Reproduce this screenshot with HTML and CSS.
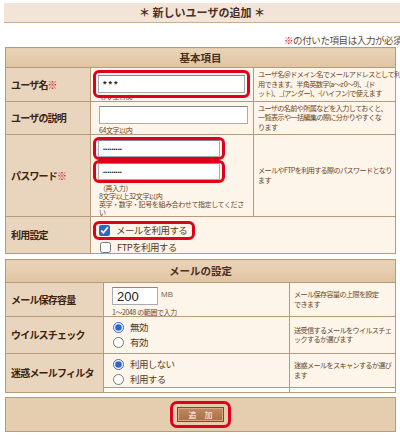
FILE: index.html
```html
<!DOCTYPE html>
<html lang="ja">
<head>
    <meta charset="UTF-8">
    <meta name="viewport" content="width=device-width, initial-scale=1.0">
    <title>新しいユーザの追加</title>
    <link rel="stylesheet" href="styles.css">
</head>
<body>
    <h1 class="title">＊ 新しいユーザの追加 ＊</h1>
    <p class="note"><span class="req">※</span>の付いた項目は入力が必須です。</p>

    <table class="form-table basic">
        <colgroup><col class="c-label"><col class="c-field"><col></colgroup>
        <tr class="head"><th colspan="3">基本項目</th></tr>
        <tr class="r-user">
            <th class="label">ユーザ名<span class="req">※</span></th>
            <td class="field">
                <span class="mark"><input type="text" class="text wide" value="***"></span>
                <div class="hint clipped">32文字以内</div>
            </td>
            <td class="desc">ユーザ名＠ドメイン名でメールアドレスとして利<br>用できます。半角英数字(a～z 0～9)、.(ド<br>ット)、_(アンダー)、-(ハイフン)で使えます</td>
        </tr>
        <tr class="r-memo">
            <th class="label">ユーザの説明</th>
            <td class="field">
                <input type="text" class="text memo">
                <div class="hint">64文字以内</div>
            </td>
            <td class="desc">ユーザの名前や所属などを入力しておくと、<br>一覧表示や一括編集の際に分かりやすくな<br>ります</td>
        </tr>
        <tr class="r-pass">
            <th class="label">パスワード<span class="req">※</span></th>
            <td class="field">
                <span class="mark"><input type="password" class="text pass" value="*********"></span>
                <span class="mark"><input type="password" class="text pass" value="*********"></span>
                <div class="hint">（再入力）<br>8文字以上32文字以内<br>英字・数字・記号を組み合わせて指定してくださ<br>い</div>
            </td>
            <td class="desc">メールやFTPを利用する際のパスワードとなり<br>ます</td>
        </tr>
        <tr class="r-use">
            <th class="label">利用設定</th>
            <td class="field" colspan="2">
                <span class="mark"><label class="opt"><input type="checkbox" checked>メールを利用する</label></span>
                <label class="opt second"><input type="checkbox">FTPを利用する</label>
            </td>
        </tr>
    </table>

    <table class="form-table mail">
        <colgroup><col class="c-label"><col class="c-field"><col></colgroup>
        <tr class="head"><th colspan="3">メールの設定</th></tr>
        <tr class="r-size">
            <th class="label">メール保存容量</th>
            <td class="field">
                <div class="size-line"><input type="text" class="text size" value="200"><span class="unit">MB</span></div>
                <div class="hint">1～2048 の範囲で入力</div>
            </td>
            <td class="desc">メール保存容量の上限を設定<br>できます</td>
        </tr>
        <tr class="r-virus">
            <th class="label">ウイルスチェック</th>
            <td class="field">
                <label class="opt"><input type="radio" name="virus" checked>無効</label>
                <label class="opt"><input type="radio" name="virus">有効</label>
            </td>
            <td class="desc">送受信するメールをウイルスチェ<br>ックするか選びます</td>
        </tr>
        <tr class="r-spam">
            <th class="label" rowspan="2">迷惑メールフィルタ</th>
            <td class="field">
                <label class="opt"><input type="radio" name="spam" checked>利用しない</label>
                <label class="opt"><input type="radio" name="spam">利用する</label>
            </td>
            <td class="desc">迷惑メールをスキャンするか選び<br>ます</td>
        </tr>
        <tr class="r-gap"><td></td><td></td></tr>
    </table>

    <div class="actions">
        <span class="mark"><button type="submit">追　加</button></span>
    </div>
</body>
</html>
```

FILE: styles.css
```css
:root {
    --border: #b8997a;
    --label-bg: #e9d5bd;
    --head-bg: #e4caab;
    --cell-bg: #fdf5ea;
    --text: #3e2410;
    --soft-text: #6a4626;
    --red: #e0001b;
}

body {
    margin: 0;
    font-family: "Noto Sans CJK JP", sans-serif;
    background: #fff;
    color: var(--text);
    overflow: hidden;
}

.title {
    margin: 3px 0 0 4px;
    height: 19px;
    line-height: 19px;
    background: #f2e4d6;
    border-bottom: 1px solid #c9ad90;
    font-size: 11px;
    font-weight: bold;
    text-align: center;
    color: #4a3020;
}

.note {
    margin: 12px 0 0 284px;
    height: 11px;
    line-height: 11px;
    font-size: 9.5px;
    letter-spacing: -0.4px;
    white-space: nowrap;
    color: var(--soft-text);
}

.req {
    color: var(--red);
    font-weight: bold;
}

.form-table {
    margin: 1px 0 0 5px;
    width: 391px;
    border-collapse: collapse;
    table-layout: fixed;
    border: 1px solid var(--border);
}

.form-table.mail {
    margin-top: 5px;
}

.form-table th,
.form-table td {
    padding: 0;
    border: 1px solid var(--border);
}

.basic .c-label { width: 85px; }
.basic .c-field { width: 163px; }
.mail .c-label { width: 98px; }
.mail .c-field { width: 186px; }

.head th {
    height: 19px;
    background: linear-gradient(#ead4b8, #e0c4a2);
    font-size: 10.5px;
    line-height: 12px;
    font-weight: bold;
    color: #4a3020;
}

.mail .head th { height: 22px; }

.label {
    background: var(--label-bg);
    text-align: left;
    padding-left: 5px !important;
    font-size: 10px;
    line-height: 12px;
    font-weight: bold;
    letter-spacing: -0.8px;
    white-space: nowrap;
}

.field {
    background: var(--cell-bg);
    vertical-align: top;
    padding: 2px 0 0 8px !important;
    font-size: 9px;
    line-height: 0;
    color: #5a3a20;
}

.desc {
    background: var(--cell-bg);
    vertical-align: middle;
    padding-left: 4px !important;
    font-size: 7.2px;
    line-height: 9.5px;
    letter-spacing: -0.7px;
    white-space: nowrap;
    color: var(--soft-text);
}

.r-user { height: 34px; }
.r-memo { height: 33px; }
.r-pass { height: 80px; }
.r-use { height: 33px; }
.r-size { height: 33px; }
.r-virus { height: 37px; }
.r-spam { height: 32px; }
.r-gap { height: 5px; }

.r-memo .field { padding-top: 4px !important; }
.r-use .field { padding-top: 4px !important; }
.r-size .field { padding-top: 4px !important; }
.r-virus .field,
.r-spam .field { padding-top: 3px !important; }

/* red annotation frames */
.mark {
    position: relative;
    z-index: 1;
    display: block;
    width: fit-content;
    margin-left: -6px;
    padding: 2px;
    border: 3px solid var(--red);
    border-radius: 6px;
    line-height: 0;
}

.r-pass .mark {
    padding: 0 2px;
}

.text {
    display: block;
    box-sizing: border-box;
    height: 18px;
    margin: 0;
    padding: 0 4px;
    border: 1px solid #a5acb5;
    border-top-color: #7f8790;
    background: #fff;
    font-family: "Liberation Sans", sans-serif;
    font-size: 11px;
    color: #222;
}

.text.wide {
    width: 147px;
    font-weight: bold;
    letter-spacing: 2px;
    font-size: 9px;
}
.text.memo { width: 149px; height: 18px; }
.text.pass {
    width: 122px;
    height: 17px;
    font-size: 6px;
    letter-spacing: 0;
}
.text.size {
    width: 46px;
    height: 18px;
    font-size: 13px;
}

.size-line {
    display: flex;
    align-items: flex-start;
}

.unit {
    margin-left: 3px;
    line-height: 16px;
    font-family: "Liberation Sans", sans-serif;
    font-size: 8px;
    color: #7a6a5a;
}

.hint {
    margin-top: 2px;
    font-size: 7px;
    line-height: 8px;
    letter-spacing: -0.4px;
    white-space: nowrap;
    color: var(--soft-text);
}

.r-pass .hint { margin-top: 1px; }

.hint.clipped {
    margin-top: -4px;
    height: 6px;
    overflow: hidden;
}

.r-size .hint { margin-top: 3px; }

.opt {
    display: flex;
    align-items: center;
    height: 15px;
    font-size: 9.5px;
    letter-spacing: -0.6px;
    line-height: 15px;
    white-space: nowrap;
}

.mark .opt {
    height: 11px;
    padding-right: 3px;
}

.r-use .mark {
    padding: 1px 2px;
}

.opt.second {
    height: 12px;
    margin-top: 1px;
}

.opt input {
    width: 11px;
    height: 11px;
    margin: 0 6px 0 1px;
    accent-color: #2f67c8;
}

.actions {
    margin: 4px 0 0 5px;
    width: 389px;
    height: 33px;
    display: flex;
    align-items: center;
    justify-content: center;
    background: #e5cdb0;
    border: 1px solid var(--border);
}

.actions .mark {
    margin-left: 0;
    padding: 3px 4px;
    border-radius: 7px;
}

button {
    display: block;
    width: 47px;
    height: 15px;
    padding: 0;
    background: linear-gradient(#c08a62, #a86e48);
    border: 1px solid #7a4a2a;
    box-shadow: inset 0 0 0 1px #d9a986;
    font-family: "Noto Sans CJK JP", sans-serif;
    font-size: 8px;
    line-height: 13px;
    color: #fff;
    cursor: pointer;
}
```
